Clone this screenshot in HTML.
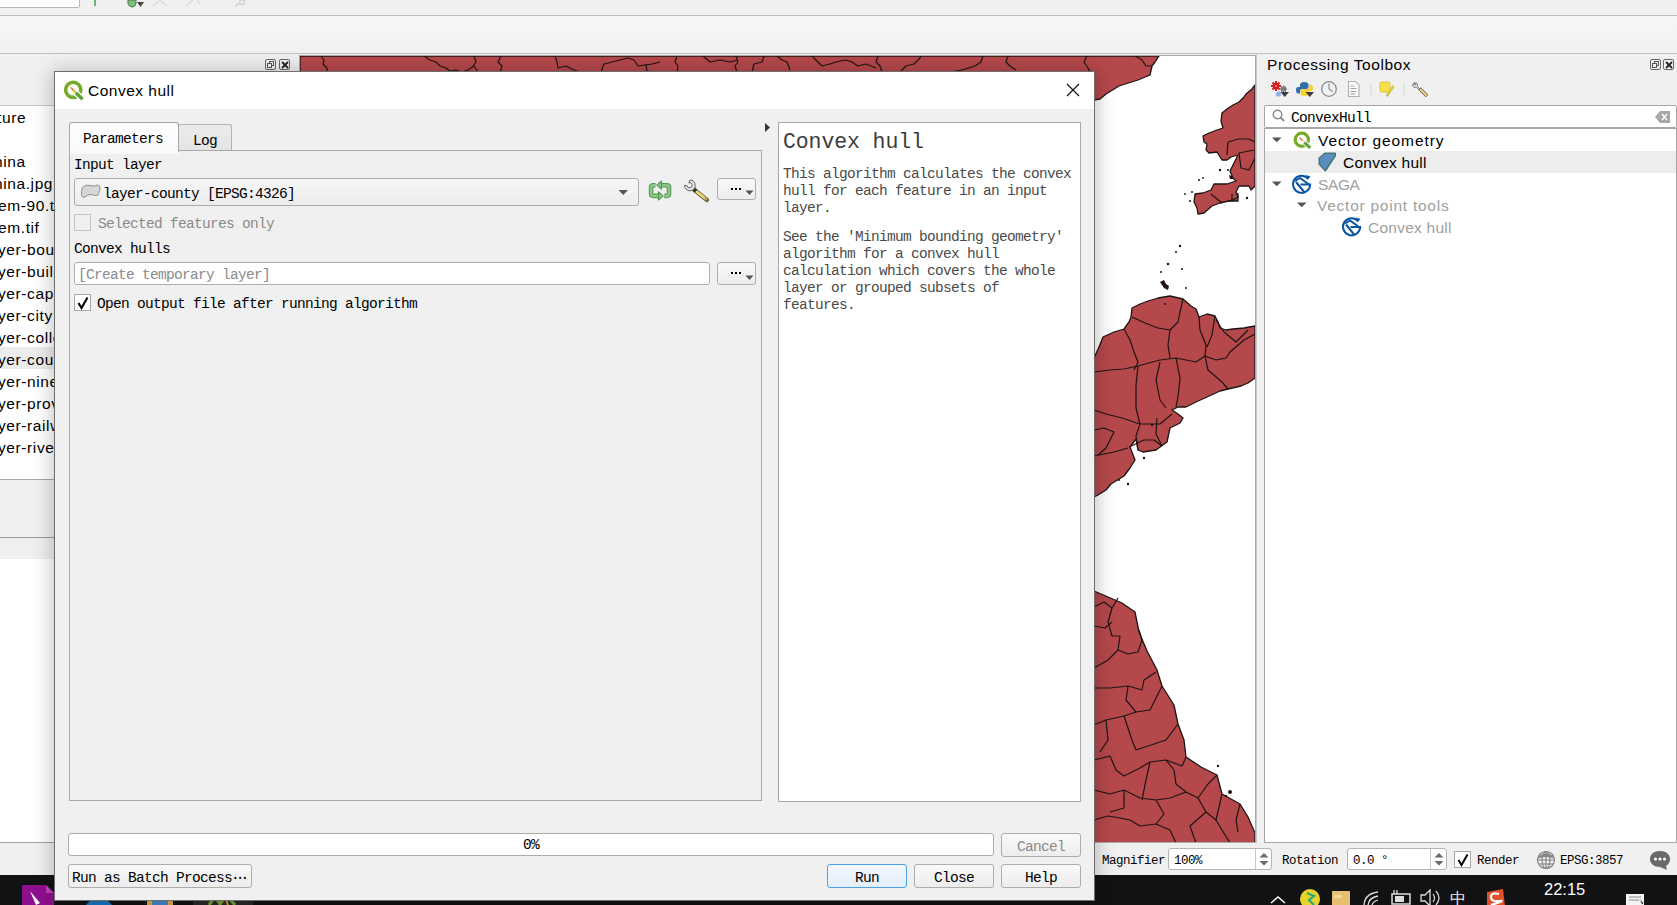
<!DOCTYPE html>
<html><head><meta charset="utf-8">
<style>
*{box-sizing:border-box;margin:0;padding:0}
html,body{width:1677px;height:905px;overflow:hidden;background:#f0f0f0;font-family:"Liberation Sans",sans-serif;position:relative}
.a{position:absolute}
.m{font-family:"Liberation Mono",monospace;white-space:pre}
.s{font-family:"Liberation Sans",sans-serif;white-space:pre}
#tb1{left:0;top:0;width:1677px;height:16px;background:#f0f0f0;border-bottom:1px solid #bcbcbc}
#tb2{left:0;top:16px;width:1677px;height:38px;background:linear-gradient(#f7f7f7,#f1f1f1);border-bottom:1px solid #c2c2c2}
#leftp{left:0;top:54px;width:300px;height:789px;background:#f0f0f0}
#map{left:299px;top:55px;width:957px;height:788px;background:#fff;border:1px solid #a9a9a9;overflow:hidden}
#tool{left:1256px;top:54px;width:421px;height:789px;background:#f0f0f0;border-left:1px solid #c8c8c8}
#status{left:0;top:843px;width:1677px;height:32px;background:#f0f0f0}
#task{left:0;top:875px;width:1677px;height:30px;background:#111213}
#dlg{left:54px;top:71px;width:1041px;height:830px;background:#f0f0f0;border:1px solid #6e6e6e;box-shadow:0 2px 18px 2px rgba(0,0,0,.24)}
#dtitle{left:-1px;top:0;width:1039px;height:37px;background:#fff}
.lrow{left:0;height:22px;width:54px;font-size:15.5px;letter-spacing:0.6px;color:#000;line-height:22px;overflow:hidden;text-indent:-2px;padding-top:2px}
.tr{font-size:15.5px;letter-spacing:0.75px;line-height:22px;height:22px;padding-top:1px}
.btn{border:1px solid #adadad;border-radius:3px;background:linear-gradient(#f9f9f9,#ededed);}
.st{font-size:12.5px;letter-spacing:-0.5px;color:#000;line-height:12px}
.dt{font-size:14.5px;letter-spacing:-0.7px;color:#000;line-height:17px}
</style></head><body>
<!-- top toolbars -->
<div id="tb1" class="a">
  <div class="a" style="left:-2px;top:-4px;width:82px;height:12px;border:1px solid #b8b8b8;border-radius:2px;background:#fdfdfd"></div>
  <div class="a" style="left:94px;top:0;width:2px;height:6px;background:#6cb36c"></div>
  <svg class="a" style="left:120px;top:0" width="140" height="14">
    <path d="M8 0 L8 4 Q9 7 13 7 Q16 6 16 3 L16 0Z" fill="#7fbb7f" stroke="#4d7d4d" stroke-width="1"/>
    <path d="M17 2 L24 2 L20.5 7Z" fill="#444"/>
    <path d="M33 6 L40 0 M47 6 L40 0" stroke="#d8dcd8" stroke-width="1.5" fill="none"/>
    <path d="M66 6 L73 0 M80 4 L77 0" stroke="#d8dcd8" stroke-width="1.5" fill="none"/>
    <path d="M115 6 L120 3" stroke="#d0d0d0" stroke-width="1.5"/><circle cx="122" cy="2" r="2.5" fill="none" stroke="#d0d0d0" stroke-width="1.3"/>
  </svg>
</div>
<div id="tb2" class="a"></div>

<!-- left panel -->
<div id="leftp" class="a">
  <div class="a" style="left:265px;top:5px;width:11px;height:11px;border:1px solid #666;border-radius:2px;background:#f4f4f4"><div class="a" style="left:3px;top:1px;width:5px;height:5px;border:1px solid #555"></div><div class="a" style="left:1px;top:3px;width:5px;height:5px;border:1px solid #555;background:#f4f4f4"></div></div>
  <div class="a" style="left:279px;top:5px;width:11px;height:11px;border:1px solid #666;border-radius:2px;background:#f4f4f4"><svg class="a" style="left:1px;top:1px" width="8" height="8"><path d="M1 1L7 7M7 1L1 7" stroke="#222" stroke-width="1.8"/></svg></div>
  <div class="a" style="left:0;top:51px;width:54px;height:374px;background:#fff;border-top:1px solid #c8c8c8"></div>
  <div class="a" style="left:0;top:425px;width:54px;height:58px;background:#f0f0f0;border-top:1px solid #a8a8a8"></div>
  <div class="a" style="left:0;top:483px;width:54px;height:22px;background:#efefef;border-top:1px solid #9a9a9a"></div><div class="a" style="left:0;top:505px;width:54px;height:284px;background:#fff"></div>
</div>
<div class="a lrow s" style="top:105px;text-indent:-3px">ture</div>
<div class="a lrow s" style="top:149px;text-indent:-6px">hina</div>
<div class="a lrow s" style="top:171px;text-indent:-6px">hina.jpg</div>
<div class="a lrow s" style="top:193px">em-90.tif</div>
<div class="a lrow s" style="top:215px">em.tif</div>
<div class="a lrow s" style="top:237px">yer-boundary</div>
<div class="a lrow s" style="top:259px">yer-building</div>
<div class="a lrow s" style="top:281px">yer-capital</div>
<div class="a lrow s" style="top:303px">yer-city</div>
<div class="a lrow s" style="top:325px">yer-collect</div>
<div class="a lrow s" style="top:347px;background:#ececec">yer-county</div>
<div class="a lrow s" style="top:369px">yer-nineline</div>
<div class="a lrow s" style="top:391px">yer-province</div>
<div class="a lrow s" style="top:413px">yer-railway</div>
<div class="a lrow s" style="top:435px">yer-river</div>
<div class="a" style="left:0;top:842px;width:55px;height:1px;background:#a0a0a0"></div>
<div class="a" style="left:0;top:843px;width:55px;height:5px;background:#ececec"></div>
<div class="a" style="left:0;top:848px;width:55px;height:1px;background:#a0a0a0"></div>
<div class="a" style="left:0;top:849px;width:55px;height:21px;background:#fff"></div>
<div class="a" style="left:0;top:870px;width:55px;height:1px;background:#a0a0a0"></div>

<!-- map -->
<div id="map" class="a">
<svg class="a" style="left:-300px;top:-56px" width="1677" height="905" id="mapsvg">
<g fill="#b5484b" stroke="#1e1414" stroke-width="1.3" stroke-linejoin="round">
<path d="M300,56 L1159,56 L1155,62 L1152,66 L1150,75 L1138,80 L1119,86 L1106,94 L1100,99 L1094,100 L1080,100 L1080,130 L300,130Z"/>
<path d="M1227,194 L1238,194 L1238,201 L1227,201Z"/><path d="M1255,85 L1252,89 L1246,94 L1244,97 L1239,102 L1233,105 L1227,109 L1222,113 L1221,121 L1223,128 L1217,130 L1209,133 L1203,136 L1204,142 L1207,144 L1206,150 L1209,153 L1217,152 L1222,160 L1227,160 L1231,157 L1238,155 L1233,165 L1230,171 L1233,178 L1236,181 L1227,184 L1214,184 L1211,190 L1203,193 L1195,194 L1194,202 L1197,208 L1198,214 L1204,213 L1212,206 L1220,203 L1233,200 L1238,197 L1236,192 L1239,186 L1249,186 L1251,190 L1255,186Z"/>
<path d="M1080,358 L1094,358 L1099,347 L1103,337 L1114,332 L1124,329 L1129,322 L1131,317 L1132,308 L1140,304 L1148,301 L1158,298 L1170,296 L1183,299 L1191,306 L1196,309 L1199,317 L1207,314 L1215,316 L1218,322 L1220,328 L1226,330 L1233,329 L1244,328 L1255,326 L1255,378 L1248,383 L1241,386 L1228,389 L1220,391 L1207,397 L1196,402 L1186,407 L1178,407 L1172,410 L1178,414 L1183,418 L1180,423 L1170,428 L1167,442 L1156,450 L1143,452 L1138,450 L1136,439 L1130,447 L1135,460 L1130,468 L1124,476 L1111,484 L1106,490 L1098,495 L1094,497 L1080,497Z"/>
<path d="M1080,591 L1094,591 L1108,597 L1122,603 L1135,612 L1139,632 L1147,651 L1157,670 L1162,686 L1174,705 L1178,724 L1184,740 L1186,757 L1201,767 L1217,775 L1222,794 L1240,804 L1248,817 L1255,833 L1255,843 L1080,843Z"/>
</g>
<g fill="none" stroke="#1e1414" stroke-width="1.2" stroke-linejoin="round">
<path d="M1227,155 L1228,142 L1238,139 L1249,139 L1255,142"/><path d="M1239,153 L1241,168 L1249,170 L1255,158"/><path d="M1239,153 L1254,150"/><path d="M1211,194 L1222,203"/><path d="M1232,194 L1232,201"/><path d="M321,56 L324,60 L323,64 L327,68 L327,72"/>
<path d="M424,56 L430,60 L436,62 L440,66 L446,68 L450,71 L456,70 L462,72 L468,70 L474,66 L478,72"/>
<path d="M474,56 L476,62 L473,66"/>
<path d="M501,56 L498,62 L502,66 L500,72"/>
<path d="M555,56 L557,62 L558,68 L566,66 L574,70 L580,72"/>
<path d="M601,72 L604,64 L620,60 L628,58 L634,60 L638,66 L652,64 L660,62"/>
<path d="M646,64 L647,72"/>
<path d="M677,56 L675,62 L678,66 L677,72"/>
<path d="M703,56 L710,62 L720,60 L730,62 L738,60"/>
<path d="M736,56 L738,62 L735,66 L737,72"/>
<path d="M752,72 L754,64 L762,62 L764,56"/>
<path d="M777,56 L782,60 L787,62 L790,70"/>
<path d="M812,56 L818,62 L822,66 L830,64 L836,62 L846,60 L852,62 L858,66 L866,64 L876,68"/>
<path d="M878,56 L876,62 L880,66 L882,72"/>
<path d="M900,72 L906,66 L914,64 L920,58 L921,56"/>
<path d="M951,72 L962,70 L975,66 L981,62 L983,56"/>
<path d="M1008,56 L1006,62 L1010,66 L1016,70"/>
<path d="M1087,56 L1084,62 L1088,68 L1090,72"/>
<path d="M1135,56 L1142,60 L1146,66 L1152,66"/>

<path d="M1132,317 L1145,323 L1158,328 L1170,330 L1178,322 L1180,312 L1183,299"/>
<path d="M1124,329 L1130,340 L1134,352 L1138,362 L1134,370"/>
<path d="M1094,372 L1110,370 L1124,369 L1138,366"/>
<path d="M1138,366 L1160,360 L1176,358 L1196,362 L1205,356 L1216,360 L1226,358"/>
<path d="M1170,330 L1168,345 L1170,358"/>
<path d="M1199,317 L1200,330 L1206,345 L1205,356"/>
<path d="M1215,316 L1212,335 L1207,347"/>
<path d="M1226,358 L1230,352 L1244,340 L1255,334"/>
<path d="M1205,356 L1208,370 L1222,382 L1228,389"/>
<path d="M1138,366 L1136,385 L1136,408 L1140,424"/>
<path d="M1160,362 L1156,380 L1160,400 L1166,408"/>
<path d="M1176,358 L1180,378 L1178,397 L1176,407"/>
<path d="M1094,410 L1106,414 L1122,418 L1140,424"/>
<path d="M1140,424 L1160,424 L1172,414"/>
<path d="M1140,424 L1136,436 L1138,450"/>
<path d="M1094,430 L1104,428 L1114,432"/>
<path d="M1114,432 L1106,448 L1098,455"/>
<path d="M1094,456 L1114,452 L1128,448"/>
<path d="M1129,447 L1144,440 L1154,440 L1162,446"/>
<path d="M1157,418 L1156,434 L1162,446"/>
<path d="M1216,320 L1224,332 L1236,342 L1248,330"/>
<path d="M1094,607 L1104,602 L1112,608 L1118,598"/>
<path d="M1094,626 L1105,628 L1112,622"/>
<path d="M1112,608 L1108,622 L1112,636 L1120,636 L1118,650 L1128,654 L1138,652 L1142,640 L1139,630"/>
<path d="M1094,668 L1108,660 L1118,650"/>
<path d="M1094,688 L1110,688 L1128,686 L1142,690 L1144,680 L1156,672"/>
<path d="M1128,686 L1126,700 L1136,712 L1150,710 L1162,686"/>
<path d="M1094,725 L1106,720 L1124,716 L1136,712"/>
<path d="M1106,720 L1108,740 L1100,752"/>
<path d="M1124,716 L1132,740 L1136,750 L1148,746 L1166,740 L1178,724"/>
<path d="M1094,760 L1110,756 L1116,770 L1124,776 L1140,768 L1150,762 L1166,760 L1182,766 L1186,757"/>
<path d="M1150,762 L1146,780 L1142,800"/>
<path d="M1166,760 L1174,770 L1176,784 L1186,792 L1198,798 L1208,784 L1217,775"/>
<path d="M1094,790 L1110,794 L1124,790 L1140,798 L1156,800 L1170,798 L1186,792"/>
<path d="M1124,790 L1124,808 L1110,812"/>
<path d="M1094,820 L1108,816 L1120,818 L1130,820 L1140,826 L1156,824 L1170,830 L1176,843"/>
<path d="M1198,798 L1206,812 L1216,820 L1222,794"/>
<path d="M1216,820 L1222,830 L1230,843"/>
<path d="M1206,812 L1190,826 L1196,843"/>
<path d="M1156,800 L1164,814 L1156,824"/>
<path d="M1240,804 L1236,820 L1238,832"/>
</g>
<g fill="#1e1414">
<circle cx="1180" cy="246" r="1.2"/><circle cx="1176" cy="252" r="1"/><circle cx="1168" cy="264" r="1.3"/><circle cx="1182" cy="269" r="1"/>
<path d="M1160,282 l4,-2 l2,4 l3,2 l-1,4 l-4,-2 z"/><circle cx="1186" cy="288" r="1"/>
<circle cx="1165" cy="304" r="1"/><circle cx="1161" cy="272" r="1"/>
<circle cx="1220" cy="170" r="1.2"/><circle cx="1228" cy="170" r="1"/><path d="M1229,175 l3,1 l1,3 l-3,0z"/><circle cx="1199" cy="180" r="1"/><circle cx="1203" cy="178" r="0.9"/><circle cx="1247" cy="198" r="1.2"/><circle cx="1190" cy="201" r="1"/><circle cx="1192" cy="192" r="1"/><circle cx="1185" cy="194" r="0.9"/><circle cx="1152" cy="425" r="1.2"/><circle cx="1128" cy="484" r="1.2"/><circle cx="1119" cy="480" r="1"/><circle cx="1144" cy="458" r="1.2"/>
<circle cx="1218" cy="766" r="1.2"/><circle cx="1230" cy="792" r="2"/><circle cx="1226" cy="796" r="1.2"/>
</g>
</svg>
</div>

<!-- toolbox -->
<div id="tool" class="a">
  <div class="a s" style="left:10px;top:1px;font-size:15.5px;letter-spacing:0.55px;line-height:20px;color:#000">Processing Toolbox</div>
  <div class="a" style="left:393px;top:5px;width:11px;height:11px;border:1px solid #666;border-radius:2px;background:#f6f6f6"><div class="a" style="left:3px;top:1px;width:5px;height:5px;border:1px solid #555"></div><div class="a" style="left:1px;top:3px;width:5px;height:5px;border:1px solid #555;background:#f6f6f6"></div></div>
  <div class="a" style="left:406px;top:5px;width:11px;height:11px;border:1px solid #666;border-radius:2px;background:#f6f6f6"><svg class="a" style="left:1px;top:1px" width="8" height="8"><path d="M1 1L7 7M7 1L1 7" stroke="#222" stroke-width="1.8"/></svg></div>
  <svg class="a" style="left:12px;top:24px" width="180" height="24">
    <g transform="translate(7,8)"><circle r="3.3" fill="#d41c1c"/><path d="M0-5V5M-5 0H5M-3.5-3.5L3.5 3.5M3.5-3.5L-3.5 3.5" stroke="#d41c1c" stroke-width="2"/><circle r="1" fill="#e88"/></g>
    <g transform="translate(14.5,11)"><circle r="2.4" fill="#7a7a7a"/><path d="M0-3.5V3.5M-3.5 0H3.5M-2.5-2.5L2.5 2.5M2.5-2.5L-2.5 2.5" stroke="#7a7a7a" stroke-width="1.3"/></g>
    <g transform="translate(9.5,16)"><circle r="2.6" fill="#8fb0e6"/></g>
    <path d="M11.5 14H20L15.75 19Z" fill="#3c3c3c"/>
    <path d="M35 4q-3.5 0-4 2.5V9H29q-2 0-2 3 0 3.5 2.5 3.5H31v-2.5q0-2 2-2h4.5q2 0 2-2V6.5q0-2.5-4.5-2.5z" fill="#2f6ea8"/>
    <path d="M36 18q3.5 0 4-2.5V13h2q2 0 2-3 0-3.5-2.5-3.5H40v2.5q0 2-2 2h-4.5q-2 0-2 2v2.5q0 2.5 4.5 2.5z" fill="#f7cf3a"/>
    <path d="M36.5 14H45L40.75 19Z" fill="#3c3c3c"/>
    <circle cx="60" cy="11" r="7.3" fill="#f2f4f6" stroke="#8a8a8a" stroke-width="1.3"/><path d="M60 5.5V11l3.6 2.6" stroke="#8a8a8a" stroke-width="1.2" fill="none"/>
    <path d="M79.5 3.5h7l3.5 3.5v11.5h-10.5z" fill="#fafafa" stroke="#b0b0b0" stroke-width="1.1"/><path d="M81.5 8h4M81.5 10.5h6M81.5 13.5h6M81.5 16h5" stroke="#9a9a9a" stroke-width="0.9"/>
    <path d="M102 6.5v10.5" stroke="#d2d2d2"/>
    <rect x="111" y="4" width="10" height="10" rx="1.5" fill="#f3e04a" stroke="#d8c030" stroke-width="0.8"/><path d="M124.5 8L118.5 17" stroke="#d8c840" stroke-width="2.6"/><path d="M118.7 16.8l-1 1.6" stroke="#888" stroke-width="1.2"/>
    <path d="M135 6.5v10.5" stroke="#d2d2d2"/>
    <path d="M146 4.5q-3 1-2.5 3.5 1.5 2 4 1.5l2 2 1-1-2-2q0.5-3-1.5-4l-0.5 2.2-1.5-0.2z" fill="#d8d8d8" stroke="#777" stroke-width="0.9"/>
    <path d="M150.5 10.5l7.5 7.5" stroke="#555" stroke-width="3.4"/><path d="M151 11l6.8 6.8" stroke="#ecd27a" stroke-width="2.2"/>
  </svg>
  <div class="a" style="left:7px;top:51px;width:413px;height:23px;background:#fff;border:1px solid #a6a6a6;border-radius:2px">
    <svg class="a" style="left:6px;top:2px" width="16" height="16"><circle cx="6.5" cy="6.5" r="4.3" fill="none" stroke="#8a8a8a" stroke-width="1.4"/><path d="M9.5 9.5L13 13" stroke="#8a8a8a" stroke-width="1.8"/></svg>
    <div class="a m" style="left:26px;top:4px;font-size:14.5px;letter-spacing:-0.7px;line-height:17px;color:#000">ConvexHull</div>
    <svg class="a" style="left:390px;top:5px" width="16" height="12"><path d="M0 6L5 0H15V12H5Z" fill="#a8a8a8"/><path d="M7 3L12 9M12 3L7 9" stroke="#fff" stroke-width="1.3"/></svg>
  </div>
  <div class="a" style="left:7px;top:74px;width:413px;height:715px;background:#fff;border:1px solid #a6a6a6">
    <div class="a" style="left:0;top:22px;width:411px;height:22px;background:#ededed"></div>
    <svg class="a" style="left:0;top:0" width="120" height="180">
      <path d="M7 8.5h9.5l-4.75 4.75z" fill="#555"/>
      <path d="M7 52.5h9.5l-4.75 4.75z" fill="#555"/>
      <path d="M32 73.5h9.5l-4.75 4.75z" fill="#555"/>
      <circle cx="36.8" cy="10.8" r="6.6" fill="none" stroke="#76aa2a" stroke-width="3.2"/><path d="M39 13L45 18.5" stroke="#fff" stroke-width="5"/><path d="M39.3 13.3L45.2 18.8" stroke="#5fa03a" stroke-width="3"/><path d="M33.5 7.5L36.5 9.5 39 13 35.5 11Z" fill="#f07a28"/>
      <path d="M54.3 29L60.1 24.2H70.2V26.8L60.4 41.7L54.3 35.3Z" fill="#5b8dbf" stroke="#4a7878" stroke-width="1.6" stroke-linejoin="round"/>
      <g transform="translate(36.5,55.5)" fill="none" stroke="#0b55a5" stroke-width="2"><path d="M6.5-6A8.6 8.6 0 1 0 8.7 0H-1"/><path d="M-6.5-3.5L-1.5-6.5 7.5 0"/><path d="M-5.5-2.5L3 8"/></g><path d="M41.0 46.0l4.5 1.5-3 3.5z" fill="#0b55a5"/>
      <g transform="translate(86.5,98)" fill="none" stroke="#0b55a5" stroke-width="2"><path d="M6.5-6A8.6 8.6 0 1 0 8.7 0H-1"/><path d="M-6.5-3.5L-1.5-6.5 7.5 0"/><path d="M-5.5-2.5L3 8"/></g><path d="M91.0 88.5l4.5 1.5-3 3.5z" fill="#0b55a5"/>
    </svg>
    <div class="a s tr" style="left:53px;top:0;color:#000;letter-spacing:0.9px">Vector geometry</div>
    <div class="a s tr" style="left:78px;top:22px;color:#000;letter-spacing:0.25px">Convex hull</div>
    <div class="a s tr" style="left:53px;top:44px;color:#a0a0a0;letter-spacing:-0.4px">SAGA</div>
    <div class="a s tr" style="left:52px;top:65px;color:#a0a0a0">Vector point tools</div>
    <div class="a s tr" style="left:103px;top:87px;color:#a0a0a0;letter-spacing:0.25px">Convex hull</div>
  </div>
</div>

<!-- status -->
<div id="status" class="a">
  <div class="a m st" style="left:1102px;top:12px">Magnifier</div>
  <div class="a" style="left:1168px;top:5px;width:104px;height:22px;background:#fff;border:1px solid #b4b4b4;border-radius:3px">
    <div class="a m st" style="left:5px;top:6px">100%</div>
    <div class="a" style="left:86px;top:0;width:1px;height:20px;background:#c8c8c8"></div>
    <svg class="a" style="left:89px;top:3px" width="12" height="15"><path d="M1.5 5.5L6 1L10.5 5.5Z" fill="#6a6a6a"/><path d="M1.5 9L10.5 9L6 13.5Z" fill="#6a6a6a"/></svg>
  </div>
  <div class="a m st" style="left:1282px;top:12px">Rotation</div>
  <div class="a" style="left:1347px;top:5px;width:100px;height:22px;background:#fff;border:1px solid #b4b4b4;border-radius:3px">
    <div class="a m st" style="left:5px;top:6px">0.0 °</div>
    <div class="a" style="left:82px;top:0;width:1px;height:20px;background:#c8c8c8"></div>
    <svg class="a" style="left:85px;top:3px" width="12" height="15"><path d="M1.5 5.5L6 1L10.5 5.5Z" fill="#6a6a6a"/><path d="M1.5 9L10.5 9L6 13.5Z" fill="#6a6a6a"/></svg>
  </div>
  <div class="a" style="left:1454px;top:8px;width:17px;height:17px;background:#fff;border:1px solid #a8a8a8">
    <svg class="a" style="left:1px;top:1px" width="14" height="14"><path d="M2.5 7L5.5 12L11.5 1.5" fill="none" stroke="#000" stroke-width="2"/></svg>
  </div>
  <div class="a m st" style="left:1477px;top:12px">Render</div>
  <svg class="a" style="left:1535px;top:7px" width="22" height="20"><g fill="none" stroke="#7c7c7c" stroke-width="1.1"><circle cx="11" cy="10" r="8.5"/><ellipse cx="11" cy="10" rx="4" ry="8.5"/><path d="M2.5 10h17M3.5 6h15M3.5 14h15M11 1.5v17"/></g><path d="M2 9q9-12 18 0q-9-4-18 0z" fill="#8a8a8a"/></svg>
  <div class="a m st" style="left:1560px;top:12px">EPSG:3857</div>
  <svg class="a" style="left:1649px;top:6px" width="22" height="22"><path d="M11 2C5 2 1 5.5 1 10s4 8 10 8l7 3-1-4c2.5-1.5 4-4 4-7 0-4.5-4-8-10-8z" fill="#6a6a6a"/><circle cx="6.5" cy="10" r="1.6" fill="#fff"/><circle cx="11" cy="10" r="1.6" fill="#fff"/><circle cx="15.5" cy="10" r="1.6" fill="#fff"/></svg>
</div>

<!-- taskbar -->
<div id="task" class="a">
  <svg class="a" style="left:20px;top:8px" width="36" height="22"><path d="M2 2h24l8 8v12H2z" fill="#8e0f8e"/><path d="M26 2l8 8h-8z" fill="#c040c0"/><path d="M10 8l10 12 -4 2z" fill="#fff"/></svg>
  <svg class="a" style="left:84px;top:22px" width="32" height="8"><path d="M2 8q6-8 14-7t12 7" fill="#1a7ac8"/></svg>
  <svg class="a" style="left:146px;top:22px" width="30" height="8"><rect x="1" y="1" width="26" height="8" fill="#e0b040"/><rect x="6" y="4" width="16" height="5" fill="#4a8ad0"/></svg>
  <div class="a" style="left:193px;top:20px;width:60px;height:10px;background:#2a2a2a"></div>
  <svg class="a" style="left:205px;top:20px" width="40" height="10"><path d="M4 10l6-8 6 8M14 10l8-9 8 9" stroke="#7aa630" stroke-width="3" fill="none"/><path d="M20 2l3 8" stroke="#e0a020" stroke-width="2"/></svg>
  <svg class="a" style="left:1268px;top:14px" width="20" height="16"><path d="M3 14L10 8L17 14" fill="none" stroke="#fff" stroke-width="1.5"/></svg>
  <svg class="a" style="left:1299px;top:13px" width="24" height="18"><circle cx="11" cy="11" r="10" fill="#e6d32a"/><path d="M8 5l7 3-5 4 5 5" stroke="#2aa878" stroke-width="2.2" fill="none"/></svg>
  <svg class="a" style="left:1330px;top:13px" width="22" height="18"><path d="M2 3h18v15H2z" fill="#e6c070"/><path d="M4 7h8v3H4z" fill="#f0d898"/></svg>
  <svg class="a" style="left:1361px;top:13px" width="22" height="18"><g fill="none" stroke="#ddd" stroke-width="1.3"><path d="M3 18q0-12 14-14"/><path d="M7 18q0-8 10-10"/><path d="M11 18q0-4 6-6"/></g></svg>
  <svg class="a" style="left:1389px;top:13px" width="24" height="18"><path d="M5 2v4M8 2v4" stroke="#ddd" stroke-width="1.3"/><rect x="3" y="6" width="18" height="10" fill="none" stroke="#ddd" stroke-width="1.5"/><rect x="6" y="8" width="9" height="6" fill="#ddd"/></svg>
  <svg class="a" style="left:1419px;top:13px" width="24" height="18"><path d="M2 7h4l5-5v16l-5-5H2z" fill="none" stroke="#ddd" stroke-width="1.3"/><path d="M14 6q3 4 0 8M17 3q6 7 0 14" fill="none" stroke="#ddd" stroke-width="1.2"/></svg>
  <div class="a" style="left:1450px;top:16px;font-size:16px;color:#eee;line-height:16px">中</div>
  <svg class="a" style="left:1483px;top:13px" width="24" height="18"><path d="M4 4l16-3 2 17-18 2z" fill="#e0502a"/><path d="M16 6q-8-2-8 3t8 4-8 4" stroke="#fff" stroke-width="2.2" fill="none"/></svg>
  <div class="a s" style="left:1544px;top:6px;font-size:16.5px;color:#fff;line-height:16px">22:15</div>
  <svg class="a" style="left:1624px;top:17px" width="24" height="13"><path d="M2 2h18v11H2z" fill="#f4f4f4"/><path d="M5 5h12M5 8h12" stroke="#888" stroke-width="1"/><path d="M15 7l3 6 2-2z" fill="#222" stroke="#fff" stroke-width=".8"/></svg>
</div>

<!-- dialog -->
<div id="dlg" class="a"><div class="a" style="left:1px;top:0;width:1037px;height:828px">
  <div id="dtitle" class="a">
    <svg class="a" style="left:8px;top:8px" width="22" height="22"><circle cx="10.2" cy="9.8" r="7.6" fill="none" stroke="#76aa2a" stroke-width="3.6"/><path d="M12.5 12.5L19.5 19" stroke="#fff" stroke-width="6"/><path d="M12.8 12.8L19.6 19.2" stroke="#5fa03a" stroke-width="3.4"/><path d="M6.8 6.2L10 8.5 12.5 12.5 9 10.5Z" fill="#f07a28"/><path d="M10 9.5L13 13" stroke="#c8d040" stroke-width="2"/></svg>
    <div class="a s" style="left:33px;top:9px;font-size:15.5px;letter-spacing:0.5px;line-height:20px;color:#000">Convex hull</div>
    <svg class="a" style="left:1011px;top:11px" width="14" height="14"><path d="M1 1L13 13M13 1L1 13" stroke="#111" stroke-width="1.2"/></svg>
  </div>
  <!-- tabs -->
  <div class="a" style="left:13px;top:50px;width:110px;height:30px;background:linear-gradient(#fdfdfd,#fafafa);border:1px solid #a8a8a8;border-bottom:none;border-radius:3px 3px 0 0;z-index:2"></div>
  <div class="a m dt" style="left:27px;top:59px;z-index:3">Parameters</div>
  <div class="a" style="left:122px;top:52px;width:54px;height:27px;background:linear-gradient(#ececec,#e4e4e4);border:1px solid #b4b4b4;border-bottom:none;border-radius:3px 3px 0 0"></div>
  <div class="a m dt" style="left:137px;top:61px">Log</div>
  <!-- params panel -->
  <div class="a" style="left:13px;top:78px;width:693px;height:651px;border:1px solid #a8a8a8;background:#f0f0f0"></div>
  <div class="a" style="left:14px;top:79px;width:108px;height:3px;background:#fafafa;z-index:2"></div>
  <div class="a m dt" style="left:18px;top:85px">Input layer</div>
  <div class="a" style="left:18px;top:106px;width:565px;height:28px;border:1px solid #adadad;border-radius:3px;background:linear-gradient(#f6f6f6,#ececec)">
    <svg class="a" style="left:5px;top:5px" width="22" height="16"><path d="M3 3q3-3 7-1.5t8-0.5q2 0.5 2 3t-1 4q0 3-2 3.5t-6-1q-4 0-7 3q-2 0-2.5-3t0.5-5q0-2 1-2.5z" fill="#d6d6d6" stroke="#8e8e8e" stroke-width="1"/></svg>
    <div class="a m dt" style="left:28px;top:7px">layer-county [EPSG:4326]</div>
    <svg class="a" style="left:543px;top:10px" width="12" height="8"><path d="M0.5 1L10 1L5.25 6Z" fill="#555"/></svg>
  </div>
  <svg class="a" style="left:588px;top:104px" width="70" height="30">
    <g fill="none" stroke-linejoin="round"><path d="M11.5 9.2H9.2Q7.1 9.2 7.1 11.5V17.6Q7.1 19.9 9.4 19.9H15M20.3 19.9H22.8Q25 19.9 25 17.6V11.5Q25 9.2 22.8 9.2H16.5" stroke="#4f984f" stroke-width="4.6"/><path d="M11.5 9.2H9.2Q7.1 9.2 7.1 11.5V17.6Q7.1 19.9 9.4 19.9H15M20.3 19.9H22.8Q25 19.9 25 17.6V11.5Q25 9.2 22.8 9.2H16.5" stroke="#8cc68c" stroke-width="2.6"/></g>
    <path d="M14.4 15.8L19.2 19.9L14.4 24Z" fill="#8cc68c" stroke="#4f984f" stroke-width="1.1" stroke-linejoin="round"/>
    <path d="M17.4 5L12.8 9.1L17.4 13.2Z" fill="#8cc68c" stroke="#4f984f" stroke-width="1.1" stroke-linejoin="round"/>
    <path d="M50.5 14L63 24" stroke="#6a6448" stroke-width="4.2" stroke-linecap="round"/><path d="M51.5 14.8L62.6 23.6" stroke="#f0d878" stroke-width="2.6"/><path d="M49.5 13L52 15.2" stroke="#333" stroke-width="4"/>
    <path d="M40.5 9.4A5.4 5.4 0 1 0 46 4L44.8 6.8A2.6 2.6 0 1 1 43 9.6Z" fill="#e6e8e6" stroke="#555" stroke-width="0.9"/>
    <circle cx="61.5" cy="22.5" r="0.9" fill="#777"/>
  </svg>
  <div class="a btn" style="left:661px;top:106px;width:39px;height:22px">
    <div class="a" style="left:13px;top:9px;width:2px;height:2px;background:#000;box-shadow:4px 0 #000,8px 0 #000"></div>
    <svg class="a" style="left:27px;top:11px" width="10" height="7"><path d="M0.5 0.5H8.5L4.5 5Z" fill="#555"/></svg>
  </div>
  <div class="a" style="left:18px;top:142px;width:17px;height:17px;border:1px solid #c4c4c4;background:#efefef"></div>
  <div class="a m dt" style="left:42px;top:144px;color:#8a8a8a">Selected features only</div>
  <div class="a m dt" style="left:18px;top:169px">Convex hulls</div>
  <div class="a" style="left:18px;top:190px;width:636px;height:23px;border:1px solid #adadad;border-radius:3px;background:#fff">
    <div class="a m dt" style="left:3px;top:4px;color:#8a8a8a">[Create temporary layer]</div>
  </div>
  <div class="a btn" style="left:661px;top:190px;width:39px;height:23px">
    <div class="a" style="left:13px;top:9px;width:2px;height:2px;background:#000;box-shadow:4px 0 #000,8px 0 #000"></div>
    <svg class="a" style="left:27px;top:12px" width="10" height="7"><path d="M0.5 0.5H8.5L4.5 5Z" fill="#555"/></svg>
  </div>
  <div class="a" style="left:18px;top:222px;width:17px;height:17px;border:1px solid #a8a8a8;background:#fff">
    <svg class="a" style="left:1px;top:1px" width="14" height="14"><path d="M2.5 7L5.5 12L11.5 1.5" fill="none" stroke="#000" stroke-width="2.1"/></svg>
  </div>
  <div class="a m dt" style="left:41px;top:224px">Open output file after running algorithm</div>
  <!-- splitter arrow -->
  <svg class="a" style="left:708px;top:50px" width="8" height="12"><path d="M1 1L6 5.5L1 10Z" fill="#333"/></svg>
  <!-- description -->
  <div class="a" style="left:722px;top:50px;width:303px;height:680px;background:#fff;border:1px solid #a8a8a8">
    <div class="a m" style="left:4px;top:7px;font-size:21.5px;letter-spacing:-0.1px;line-height:24px;color:#3c3c3c">Convex hull</div>
    <div class="a m dt" style="left:4px;top:43px;color:#4a4a4a">This algorithm calculates the convex
hull for each feature in an input
layer.</div>
    <div class="a m dt" style="left:4px;top:106px;color:#4a4a4a">See the 'Minimum bounding geometry'
algorithm for a convex hull
calculation which covers the whole
layer or grouped subsets of
features.</div>
  </div>
  <!-- progress -->
  <div class="a" style="left:12px;top:761px;width:926px;height:23px;border:1px solid #adadad;border-radius:3px;background:#fff">
    <div class="a m dt" style="left:454px;top:3px">0%</div>
  </div>
  <div class="a btn" style="left:945px;top:761px;width:80px;height:24px"><div class="a m dt" style="left:0;width:78px;text-align:center;top:5px;color:#8a8a8a">Cancel</div></div>
  <div class="a btn" style="left:12px;top:792px;width:184px;height:24px"><div class="a m dt" style="left:3px;top:5px">Run as Batch Process<span style="letter-spacing:-4px;position:relative;left:-1px">···</span></div></div>
  <div class="a btn" style="left:771px;top:792px;width:80px;height:24px;border-color:#4aa3ea;background:linear-gradient(#f3f8fd,#e3eef9)"><div class="a m dt" style="left:0;width:78px;text-align:center;top:5px">Run</div></div>
  <div class="a btn" style="left:858px;top:792px;width:80px;height:24px"><div class="a m dt" style="left:0;width:78px;text-align:center;top:5px">Close</div></div>
  <div class="a btn" style="left:945px;top:792px;width:80px;height:24px"><div class="a m dt" style="left:0;width:78px;text-align:center;top:5px">Help</div></div>
</div></div>
</body></html>
